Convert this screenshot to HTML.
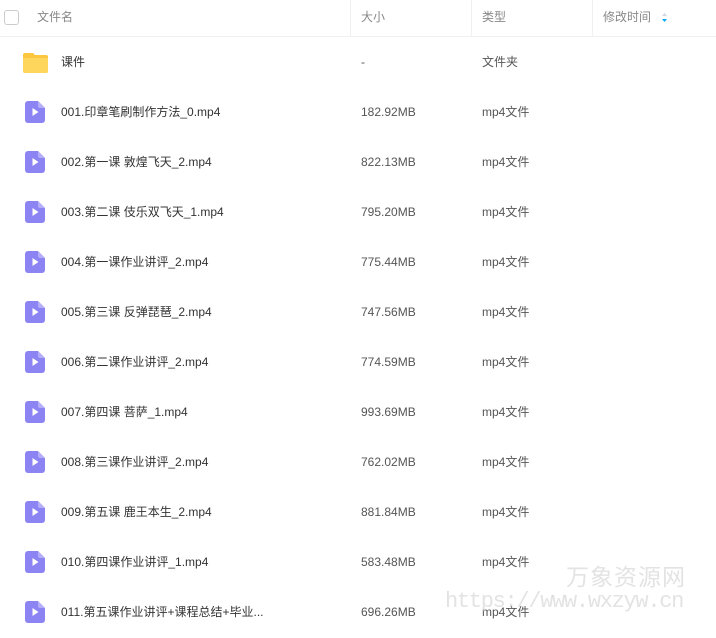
<!DOCTYPE html>
<html><head><meta charset="utf-8"><style>
body{margin:0;width:716px;height:638px;background:#fff;font-family:"Liberation Sans","Noto Sans CJK SC",sans-serif;font-size:12px;color:#424e67;overflow:hidden;position:relative}
span{line-height:16px}
.hdr{position:absolute;left:0;top:0;width:716px;height:36px;border-bottom:1px solid #f0f0f3;color:#888;}
.hdr span{position:absolute;top:9px}
.div{position:absolute;top:0;width:1px;height:36px;background:#f0f0f3}
.row{position:absolute;left:0;width:716px;height:50px}
.row .n{position:absolute;left:61px;top:17px;color:#333}
.row .s{position:absolute;left:361px;top:17px;color:#555}
.row .t{position:absolute;left:482px;top:17px;color:#555}
.ic{position:absolute;left:25px;top:14px}
.wm{position:absolute;color:rgba(200,200,200,.5)}
</style></head><body>
<div class="hdr">
<div style="position:absolute;left:4px;top:10px;width:13px;height:13px;border:1px solid #ccc;border-radius:3px"></div>
<span style="left:37px">文件名</span>
<div class="div" style="left:350px"></div><span style="left:361px">大小</span>
<div class="div" style="left:471px"></div><span style="left:482px">类型</span>
<div class="div" style="left:592px"></div><span style="left:603px">修改时间</span>
<svg style="position:absolute;left:661px;top:12px" width="7" height="11"><path d="M3.5 1L6 4H1z" fill="#cfd8e3"/><path d="M3.5 10L6 7H1z" fill="#06a7ff"/></svg>
</div>
<div class="row" style="top:37px">
<svg class="ic" style="left:23px" width="25" height="22" viewBox="0 0 25 22"><path d="M2 2h8l2 2h11a2 2 0 0 1 2 2v14a2 2 0 0 1-2 2H2a2 2 0 0 1-2-2V4a2 2 0 0 1 2-2z" fill="#fcc63f"/><path d="M0 7h25v13a2 2 0 0 1-2 2H2a2 2 0 0 1-2-2z" fill="#ffd65c"/></svg>
<span class="n">课件</span><span class="s">-</span><span class="t">文件夹</span></div>
<div id="rows"></div>
<script>
const d=[["001.印章笔刷制作方法_0.mp4","182.92MB"],["002.第一课 敦煌飞天_2.mp4","822.13MB"],["003.第二课 伎乐双飞天_1.mp4","795.20MB"],["004.第一课作业讲评_2.mp4","775.44MB"],["005.第三课 反弹琵琶_2.mp4","747.56MB"],["006.第二课作业讲评_2.mp4","774.59MB"],["007.第四课 菩萨_1.mp4","993.69MB"],["008.第三课作业讲评_2.mp4","762.02MB"],["009.第五课 鹿王本生_2.mp4","881.84MB"],["010.第四课作业讲评_1.mp4","583.48MB"],["011.第五课作业讲评+课程总结+毕业...","696.26MB"]];
let h="";d.forEach((r,i)=>{h+=`<div class="row" style="top:${87+i*50}px"><svg class="ic" width="20" height="22" viewBox="0 0 20 22"><path d="M3 0h10l7 7v12a3 3 0 0 1-3 3H3a3 3 0 0 1-3-3V3a3 3 0 0 1 3-3z" fill="#8d84f4"/><path d="M13 0l7 7h-5a2 2 0 0 1-2-2z" fill="#b4adf9"/><path d="M7.5 7v8l6-4z" fill="#fff"/></svg><span class="n">${r[0]}</span><span class="s">${r[1]}</span><span class="t">mp4文件</span></div>`});
document.getElementById("rows").innerHTML=h;
</script>
<div class="wm" style="left:566px;top:563px;font-size:23px;letter-spacing:1px;line-height:28px">万象资源网</div>
<div class="wm" style="left:445px;top:589px;font-size:22px;font-family:'Liberation Mono',monospace;letter-spacing:-1.3px;line-height:26px">https://www.wxzyw.cn</div>
</body></html>
